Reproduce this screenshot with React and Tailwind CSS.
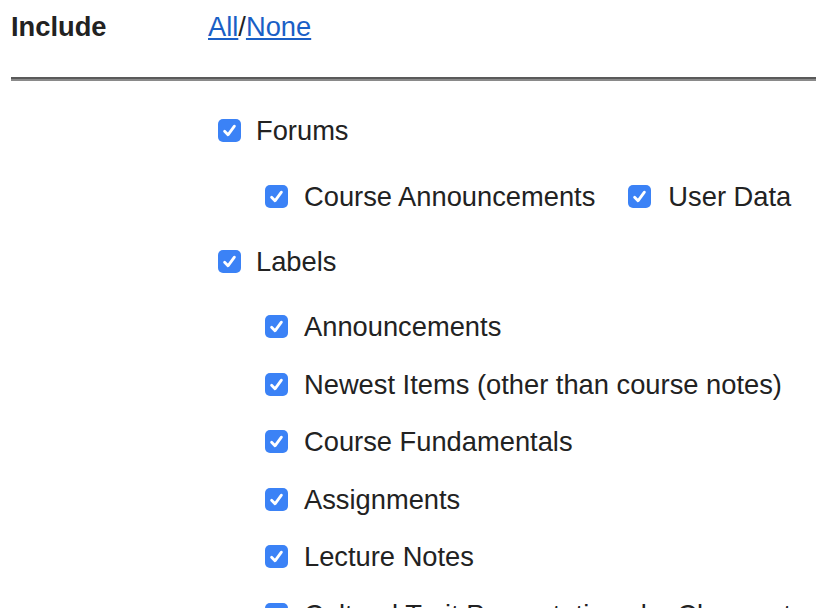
import React from "react";

function Box() {
  return (
    <span className="flex h-[23px] w-[23px] shrink-0 items-center justify-center rounded-[5px] bg-[#3b82f6]">
      <svg width="23" height="23" viewBox="0 0 23 23" fill="none">
        <path d="M6.6 12.2 L10 15.8 L16.4 7.2" stroke="white" strokeWidth="2.8" strokeLinecap="round" strokeLinejoin="round" />
      </svg>
    </span>
  );
}

function Item({ label, className = "" }) {
  return (
    <div className={"flex h-[31px] items-center gap-[15px] whitespace-nowrap " + className}>
      <Box />
      <span>{label}</span>
    </div>
  );
}

export default function App() {
  const labels = [
    "Newest Items (other than course notes)",
    "Course Fundamentals",
    "Assignments",
    "Lecture Notes",
    "Cultural Trait Presentations by Classmates",
  ];
  return (
    <div
      className="h-[608px] w-[816px] overflow-hidden bg-white pl-[11px] text-[27.3px] leading-[31px] text-[#222]"
      style={{ fontFamily: '"Liberation Sans", Arial, sans-serif' }}
    >
      <div className="flex pt-[11px]">
        <div className="w-[197px] font-bold">Include</div>
        <div>
          <a href="#" className="text-[#1a5fc6] underline">All</a>
          <span>/</span>
          <a href="#" className="text-[#1a5fc6] underline">None</a>
        </div>
      </div>
      <div className="mt-[35px] h-[4px] border-t-2 border-t-[#5a5a5a] bg-[#8a8a8a]" />
      <div className="flex flex-col pl-[207px] pt-[34px]">
        <Item label="Forums" />
        <div className="mt-[35px] flex pl-[47px]">
          <Item label="Course Announcements" className="gap-[16px]" />
          <Item label="User Data" className="ml-[33px] gap-[17px]" />
        </div>
        <Item label="Labels" className="mt-[34px]" />
        <div className="flex flex-col pl-[47px]">
          <Item label="Announcements" className="mt-[34px] gap-[16px]" />
          {labels.map((l) => (
            <Item key={l} label={l} className="mt-[26.5px] gap-[16px]" />
          ))}
        </div>
      </div>
    </div>
  );
}
